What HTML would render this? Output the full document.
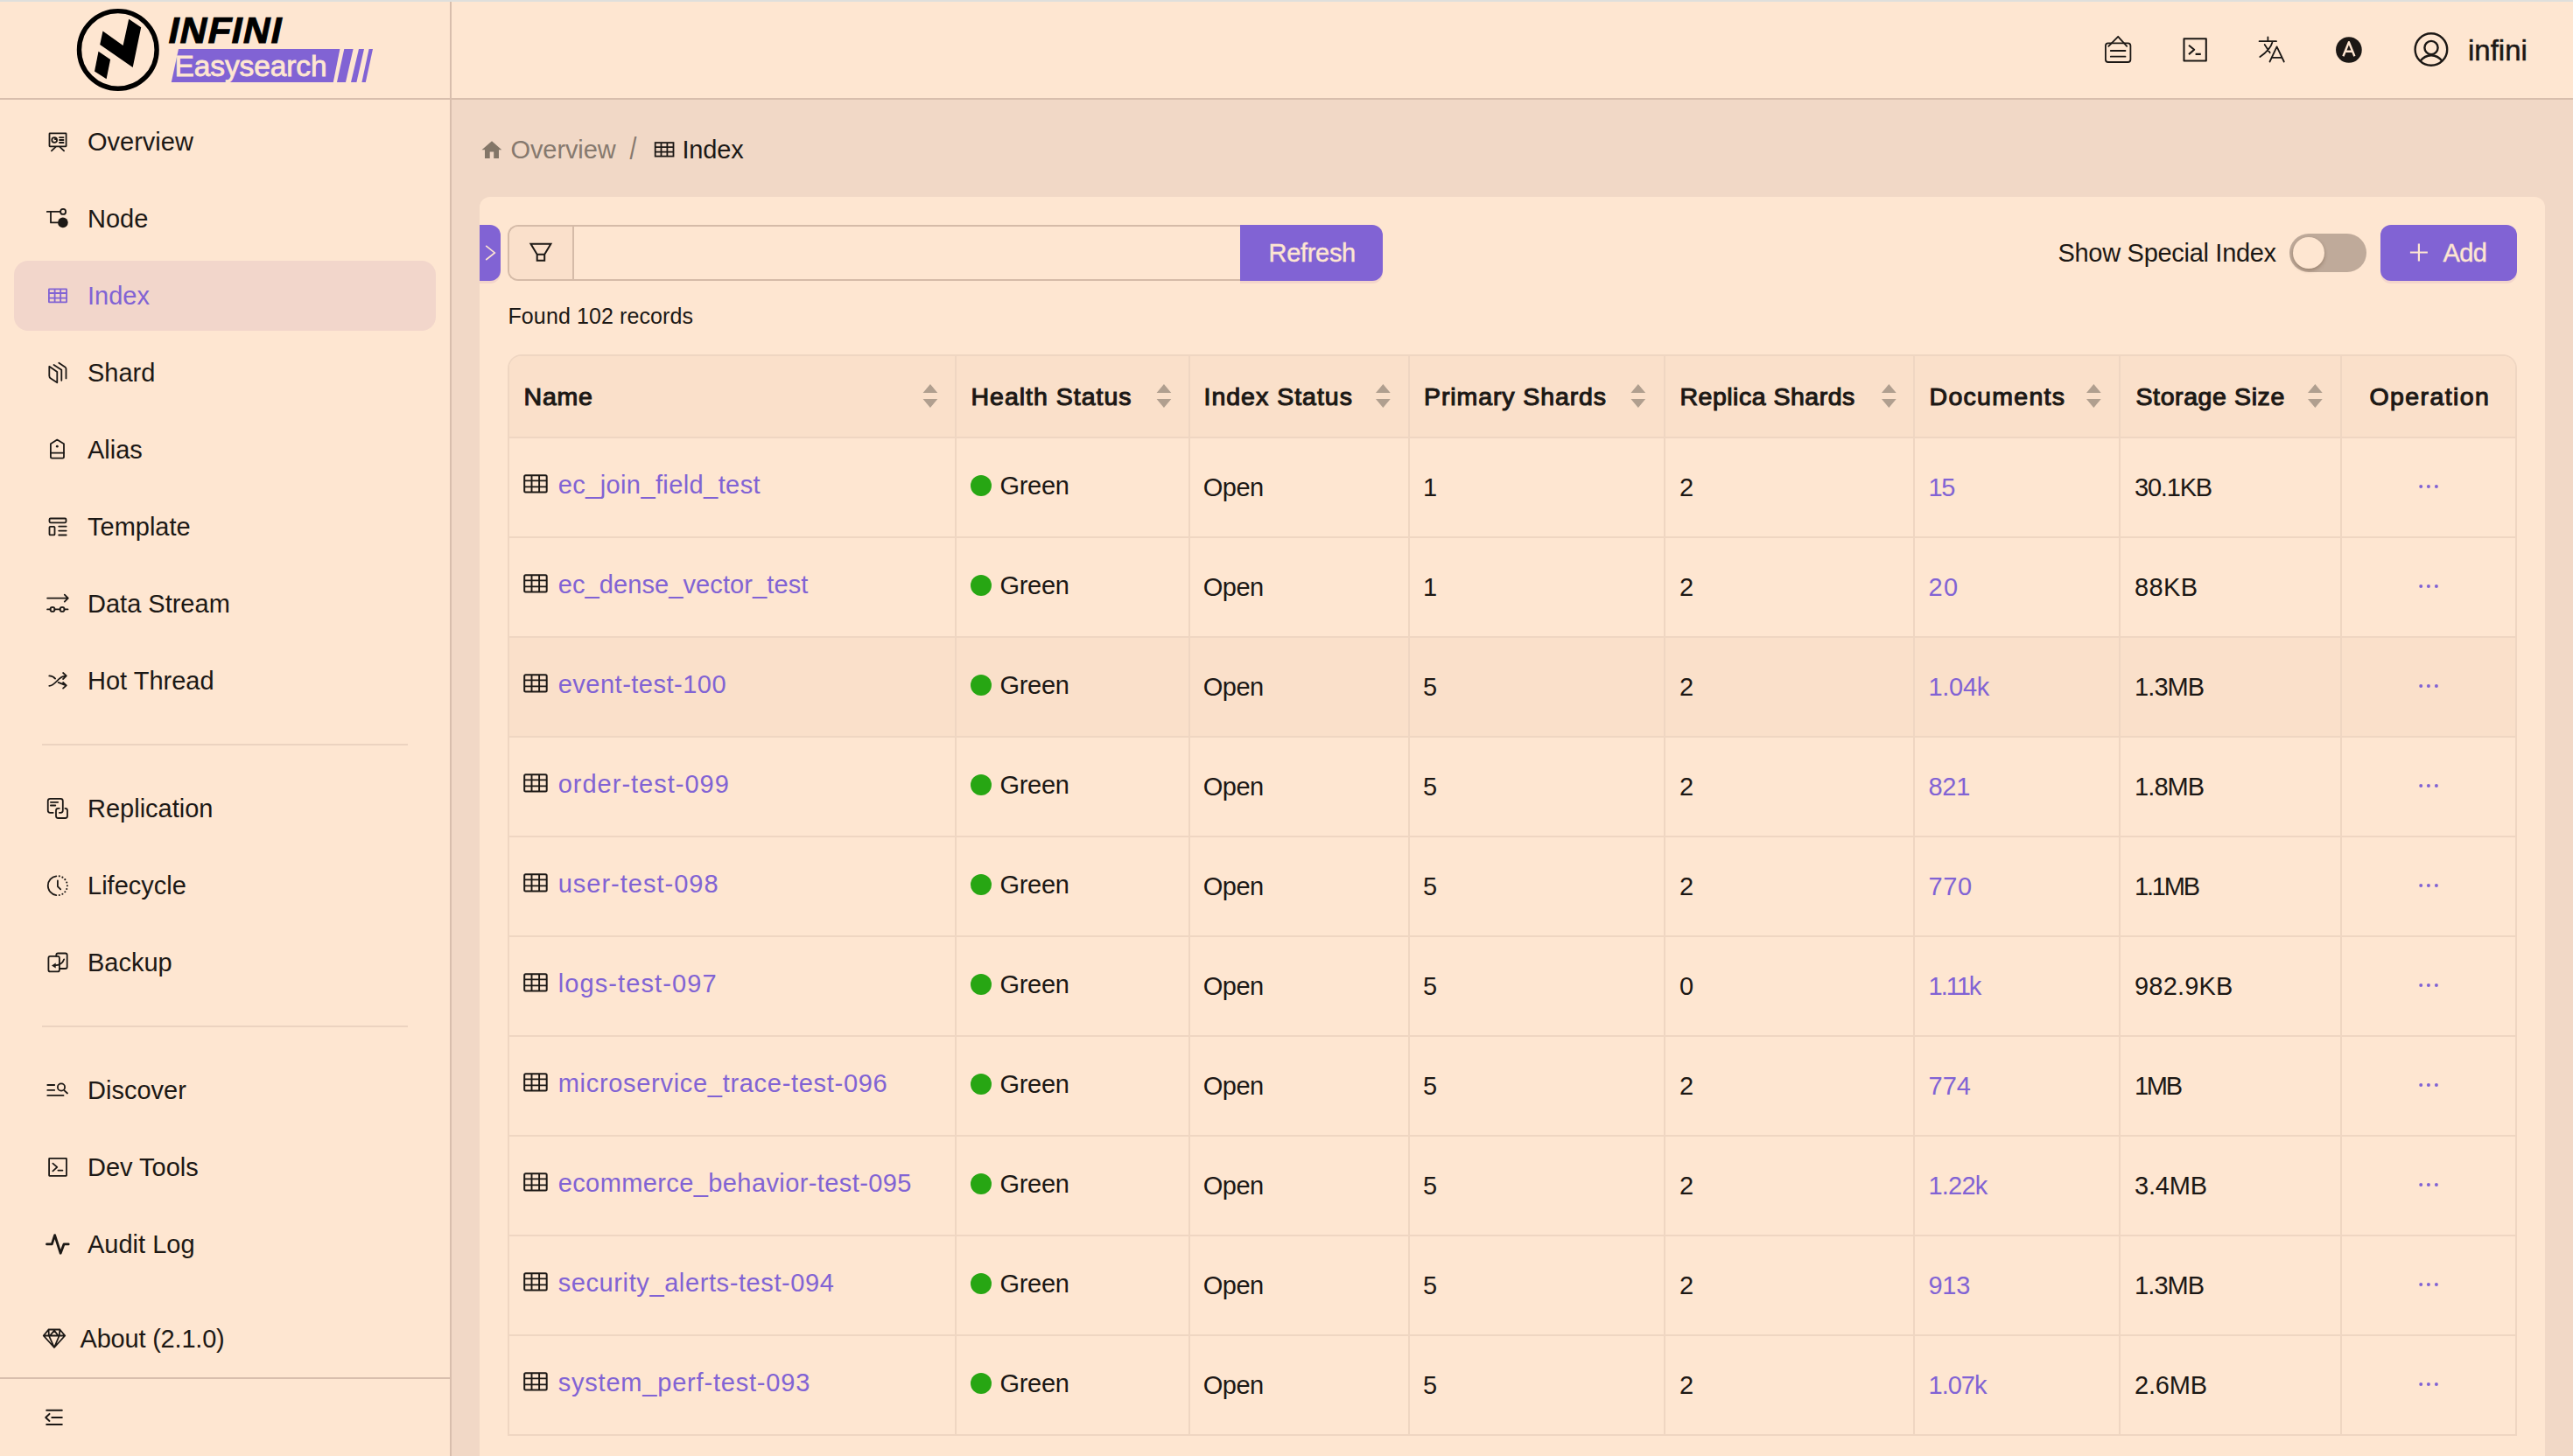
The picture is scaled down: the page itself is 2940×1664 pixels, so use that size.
<!DOCTYPE html>
<html><head><meta charset="utf-8">
<style>
*{box-sizing:border-box;margin:0;padding:0}
html,body{width:2940px;height:1664px;overflow:hidden}
body{position:relative;background:#f1d8c6;font-family:"Liberation Sans",sans-serif;color:#1c1815}
.a{position:absolute}
.t{position:absolute;white-space:nowrap}
svg{position:absolute;overflow:visible}
@media (max-width:1600px){html{zoom:0.5}}
</style></head>
<body>

<div class="a" style="left:0px;top:0px;width:2940px;height:2px;background:#dfdfdc;"></div>
<div class="a" style="left:0px;top:2px;width:2940px;height:110px;background:#fee6d1;"></div>
<div class="a" style="left:0px;top:114px;width:514px;height:1550px;background:#fee6d1;"></div>
<div class="a" style="left:0px;top:112px;width:2940px;height:2px;background:#d8bead;"></div>
<div class="a" style="left:514px;top:2px;width:2px;height:1662px;background:#d8bead;"></div>
<div class="a" style="left:16px;top:298px;width:482px;height:80px;background:#f2d6cb;border-radius:16px"></div>
<div class="t" style="left:100px;top:146.05px;font-size:29px;line-height:33px;letter-spacing:0px">Overview</div>
<div class="t" style="left:100px;top:234.05px;font-size:29px;line-height:33px;letter-spacing:0px">Node</div>
<div class="t" style="left:100px;top:322.05px;font-size:29px;line-height:33px;color:#8163d4;letter-spacing:0px">Index</div>
<div class="t" style="left:100px;top:410.05px;font-size:29px;line-height:33px;letter-spacing:0px">Shard</div>
<div class="t" style="left:100px;top:498.05px;font-size:29px;line-height:33px;letter-spacing:0px">Alias</div>
<div class="t" style="left:100px;top:586.05px;font-size:29px;line-height:33px;letter-spacing:0px">Template</div>
<div class="t" style="left:100px;top:674.05px;font-size:29px;line-height:33px;letter-spacing:0px">Data Stream</div>
<div class="t" style="left:100px;top:762.05px;font-size:29px;line-height:33px;letter-spacing:0px">Hot Thread</div>
<div class="t" style="left:100px;top:908.05px;font-size:29px;line-height:33px;letter-spacing:0px">Replication</div>
<div class="t" style="left:100px;top:996.05px;font-size:29px;line-height:33px;letter-spacing:0px">Lifecycle</div>
<div class="t" style="left:100px;top:1084.05px;font-size:29px;line-height:33px;letter-spacing:0px">Backup</div>
<div class="t" style="left:100px;top:1230.05px;font-size:29px;line-height:33px;letter-spacing:0px">Discover</div>
<div class="t" style="left:100px;top:1318.05px;font-size:29px;line-height:33px;letter-spacing:0px">Dev Tools</div>
<div class="t" style="left:100px;top:1406.05px;font-size:29px;line-height:33px;letter-spacing:0px">Audit Log</div>
<div class="t" style="left:91.5px;top:1514.05px;font-size:29px;line-height:33px;letter-spacing:-0.2px">About (2.1.0)</div>
<div class="a" style="left:48px;top:850px;width:418px;height:2px;background:#ecd3c0;"></div>
<div class="a" style="left:48px;top:1172px;width:418px;height:2px;background:#ecd3c0;"></div>
<div class="a" style="left:0px;top:1574px;width:514px;height:2px;background:#d8bead;"></div>
<div class="t" style="left:2820px;top:38.57px;font-size:33px;line-height:38px;-webkit-text-stroke:0.5px #1c1815">infini</div>
<div class="t" style="left:189.8px;top:10.95px;font-size:42px;line-height:48px;color:#000;font-weight:bold;letter-spacing:1.5px;transform:skewX(-12deg);transform-origin:0 40px;-webkit-text-stroke:0.9px #000">INFINI</div>
<div class="t" style="left:583.5px;top:155.05px;font-size:29px;line-height:33px;color:#86796e;letter-spacing:-0.1px">Overview</div>
<div class="t" style="left:719.5px;top:155.12px;font-size:28.5px;line-height:33px;color:#86796e;transform:scaleY(1.25);transform-origin:0 24px">/</div>
<div class="t" style="left:779.5px;top:155.05px;font-size:29px;line-height:33px;letter-spacing:-0.2px">Index</div>
<div class="a" style="left:548px;top:225px;width:2360px;height:1500px;background:#fee6d1;border-radius:12px"></div>
<div class="a" style="left:548px;top:257px;width:24px;height:64px;background:#8163d4;border-radius:0 12px 12px 0;box-shadow:0 3px 0 #f3d5cb"></div>
<div class="a" style="left:580px;top:257px;width:837px;height:64px;background:#fee6d1;border:2px solid #d5bba8;border-right:none;border-radius:12px 0 0 12px"></div>
<div class="a" style="left:582px;top:259px;width:72px;height:60px;background:#fae0cb;border-radius:10px 0 0 10px"></div>
<div class="a" style="left:654px;top:259px;width:2px;height:60px;background:#d5bba8;"></div>
<div class="a" style="left:1417px;top:257px;width:163px;height:64px;background:#8163d4;border-radius:0 12px 12px 0;box-shadow:0 3px 0 #f3d5cb"></div>
<div class="t" style="left:1449.5px;top:273.05px;font-size:29px;line-height:33px;color:#fee6d1;letter-spacing:-0.3px;-webkit-text-stroke:0.4px #fee6d1">Refresh</div>
<div class="t" style="left:2351.5px;top:273.05px;font-size:29px;line-height:33px;letter-spacing:-0.3px">Show Special Index</div>
<div class="a" style="left:2616px;top:267px;width:88px;height:44px;background:#bfaa9a;border-radius:22px"></div>
<div class="a" style="left:2620px;top:271px;width:36px;height:36px;background:#fee6d1;border-radius:18px;box-shadow:0 2px 4px rgba(60,30,0,.3)"></div>
<div class="a" style="left:2720px;top:257px;width:156px;height:64px;background:#8163d4;border-radius:12px;box-shadow:0 3px 0 #f3d5cb"></div>
<div class="t" style="left:2791.5px;top:273.05px;font-size:29px;line-height:33px;color:#fee6d1;letter-spacing:-0.6px;-webkit-text-stroke:0.4px #fee6d1">Add</div>
<div class="t" style="left:580.5px;top:347.34px;font-size:25px;line-height:29px;letter-spacing:0.1px">Found 102 records</div>
<div class="a" style="left:580px;top:405px;width:2296px;height:1236px;background:#fee6d1;border:2px solid #efd6c2;border-bottom:none;border-radius:16px 16px 0 0"></div>
<div class="a" style="left:582px;top:407px;width:2292px;height:92px;background:#fae0ca;border-radius:14px 14px 0 0"></div>
<div class="a" style="left:582px;top:729px;width:2292px;height:112px;background:#fae0ca;"></div>
<div class="a" style="left:1091px;top:407px;width:2px;height:1234px;background:#efd6c2;"></div>
<div class="a" style="left:1358px;top:407px;width:2px;height:1234px;background:#efd6c2;"></div>
<div class="a" style="left:1609px;top:407px;width:2px;height:1234px;background:#efd6c2;"></div>
<div class="a" style="left:1901px;top:407px;width:2px;height:1234px;background:#efd6c2;"></div>
<div class="a" style="left:2186px;top:407px;width:2px;height:1234px;background:#efd6c2;"></div>
<div class="a" style="left:2421px;top:407px;width:2px;height:1234px;background:#efd6c2;"></div>
<div class="a" style="left:2674px;top:407px;width:2px;height:1234px;background:#efd6c2;"></div>
<div class="a" style="left:580px;top:499px;width:2296px;height:2px;background:#efd6c2;"></div>
<div class="a" style="left:580px;top:613px;width:2296px;height:2px;background:#efd6c2;"></div>
<div class="a" style="left:580px;top:727px;width:2296px;height:2px;background:#efd6c2;"></div>
<div class="a" style="left:580px;top:841px;width:2296px;height:2px;background:#efd6c2;"></div>
<div class="a" style="left:580px;top:955px;width:2296px;height:2px;background:#efd6c2;"></div>
<div class="a" style="left:580px;top:1069px;width:2296px;height:2px;background:#efd6c2;"></div>
<div class="a" style="left:580px;top:1183px;width:2296px;height:2px;background:#efd6c2;"></div>
<div class="a" style="left:580px;top:1297px;width:2296px;height:2px;background:#efd6c2;"></div>
<div class="a" style="left:580px;top:1411px;width:2296px;height:2px;background:#efd6c2;"></div>
<div class="a" style="left:580px;top:1525px;width:2296px;height:2px;background:#efd6c2;"></div>
<div class="a" style="left:580px;top:1639px;width:2296px;height:2px;background:#efd6c2;"></div>
<div class="t" style="left:598.5px;top:437.22px;font-size:28.5px;line-height:33px;letter-spacing:0.8px;-webkit-text-stroke:1.1px #1c1815">Name</div>
<div class="t" style="left:1109.5px;top:437.22px;font-size:28.5px;line-height:33px;letter-spacing:1.0px;-webkit-text-stroke:1.1px #1c1815">Health Status</div>
<div class="t" style="left:1375.5px;top:437.22px;font-size:28.5px;line-height:33px;letter-spacing:1.0px;-webkit-text-stroke:1.1px #1c1815">Index Status</div>
<div class="t" style="left:1627.0px;top:437.22px;font-size:28.5px;line-height:33px;letter-spacing:0.9px;-webkit-text-stroke:1.1px #1c1815">Primary Shards</div>
<div class="t" style="left:1919.5px;top:437.22px;font-size:28.5px;line-height:33px;letter-spacing:0.5px;-webkit-text-stroke:1.1px #1c1815">Replica Shards</div>
<div class="t" style="left:2204.5px;top:437.22px;font-size:28.5px;line-height:33px;letter-spacing:1.3px;-webkit-text-stroke:1.1px #1c1815">Documents</div>
<div class="t" style="left:2440.5px;top:437.22px;font-size:28.5px;line-height:33px;letter-spacing:0.6px;-webkit-text-stroke:1.1px #1c1815">Storage Size</div>
<div class="t" style="left:2707.5px;top:437.22px;font-size:28.5px;line-height:33px;letter-spacing:1.4px;-webkit-text-stroke:1.1px #1c1815">Operation</div>
<div class="t" style="left:637.7px;top:537.65px;font-size:29px;line-height:33px;color:#8163d4;letter-spacing:0.4px">ec_join_field_test</div>
<div class="a" style="left:1109px;top:543px;width:24px;height:24px;border-radius:50%;background:#27a613"></div>
<div class="t" style="left:1142.5px;top:538.95px;font-size:29px;line-height:33px;letter-spacing:-0.3px">Green</div>
<div class="t" style="left:1374.8px;top:541.05px;font-size:29px;line-height:33px;letter-spacing:-0.5px">Open</div>
<div class="t" style="left:1626px;top:541.05px;font-size:29px;line-height:33px">1</div>
<div class="t" style="left:1919px;top:541.05px;font-size:29px;line-height:33px">2</div>
<div class="t" style="left:2203.5px;top:541.05px;font-size:29px;line-height:33px;color:#8163d4;letter-spacing:-1.5px">15</div>
<div class="t" style="left:2439px;top:541.05px;font-size:29px;line-height:33px;letter-spacing:-1.2px">30.1KB</div>
<div class="t" style="left:637.7px;top:651.65px;font-size:29px;line-height:33px;color:#8163d4;letter-spacing:0.1px">ec_dense_vector_test</div>
<div class="a" style="left:1109px;top:657px;width:24px;height:24px;border-radius:50%;background:#27a613"></div>
<div class="t" style="left:1142.5px;top:652.95px;font-size:29px;line-height:33px;letter-spacing:-0.3px">Green</div>
<div class="t" style="left:1374.8px;top:655.05px;font-size:29px;line-height:33px;letter-spacing:-0.5px">Open</div>
<div class="t" style="left:1626px;top:655.05px;font-size:29px;line-height:33px">1</div>
<div class="t" style="left:1919px;top:655.05px;font-size:29px;line-height:33px">2</div>
<div class="t" style="left:2203.5px;top:655.05px;font-size:29px;line-height:33px;color:#8163d4;letter-spacing:1.3px">20</div>
<div class="t" style="left:2439px;top:655.05px;font-size:29px;line-height:33px;letter-spacing:0.4px">88KB</div>
<div class="t" style="left:637.7px;top:765.65px;font-size:29px;line-height:33px;color:#8163d4;letter-spacing:0.5px">event-test-100</div>
<div class="a" style="left:1109px;top:771px;width:24px;height:24px;border-radius:50%;background:#27a613"></div>
<div class="t" style="left:1142.5px;top:766.95px;font-size:29px;line-height:33px;letter-spacing:-0.3px">Green</div>
<div class="t" style="left:1374.8px;top:769.05px;font-size:29px;line-height:33px;letter-spacing:-0.5px">Open</div>
<div class="t" style="left:1626px;top:769.05px;font-size:29px;line-height:33px">5</div>
<div class="t" style="left:1919px;top:769.05px;font-size:29px;line-height:33px">2</div>
<div class="t" style="left:2203.5px;top:769.05px;font-size:29px;line-height:33px;color:#8163d4;letter-spacing:-0.3px">1.04k</div>
<div class="t" style="left:2439px;top:769.05px;font-size:29px;line-height:33px;letter-spacing:-0.9px">1.3MB</div>
<div class="t" style="left:637.7px;top:879.65px;font-size:29px;line-height:33px;color:#8163d4;letter-spacing:1.0px">order-test-099</div>
<div class="a" style="left:1109px;top:885px;width:24px;height:24px;border-radius:50%;background:#27a613"></div>
<div class="t" style="left:1142.5px;top:880.95px;font-size:29px;line-height:33px;letter-spacing:-0.3px">Green</div>
<div class="t" style="left:1374.8px;top:883.05px;font-size:29px;line-height:33px;letter-spacing:-0.5px">Open</div>
<div class="t" style="left:1626px;top:883.05px;font-size:29px;line-height:33px">5</div>
<div class="t" style="left:1919px;top:883.05px;font-size:29px;line-height:33px">2</div>
<div class="t" style="left:2203.5px;top:883.05px;font-size:29px;line-height:33px;color:#8163d4;letter-spacing:-0.3px">821</div>
<div class="t" style="left:2439px;top:883.05px;font-size:29px;line-height:33px;letter-spacing:-0.9px">1.8MB</div>
<div class="t" style="left:637.7px;top:993.65px;font-size:29px;line-height:33px;color:#8163d4;letter-spacing:1.0px">user-test-098</div>
<div class="a" style="left:1109px;top:999px;width:24px;height:24px;border-radius:50%;background:#27a613"></div>
<div class="t" style="left:1142.5px;top:994.95px;font-size:29px;line-height:33px;letter-spacing:-0.3px">Green</div>
<div class="t" style="left:1374.8px;top:997.05px;font-size:29px;line-height:33px;letter-spacing:-0.5px">Open</div>
<div class="t" style="left:1626px;top:997.05px;font-size:29px;line-height:33px">5</div>
<div class="t" style="left:1919px;top:997.05px;font-size:29px;line-height:33px">2</div>
<div class="t" style="left:2203.5px;top:997.05px;font-size:29px;line-height:33px;color:#8163d4;letter-spacing:0.6px">770</div>
<div class="t" style="left:2439px;top:997.05px;font-size:29px;line-height:33px;letter-spacing:-2.2px">1.1MB</div>
<div class="t" style="left:637.7px;top:1107.65px;font-size:29px;line-height:33px;color:#8163d4;letter-spacing:1.1px">logs-test-097</div>
<div class="a" style="left:1109px;top:1113px;width:24px;height:24px;border-radius:50%;background:#27a613"></div>
<div class="t" style="left:1142.5px;top:1108.95px;font-size:29px;line-height:33px;letter-spacing:-0.3px">Green</div>
<div class="t" style="left:1374.8px;top:1111.05px;font-size:29px;line-height:33px;letter-spacing:-0.5px">Open</div>
<div class="t" style="left:1626px;top:1111.05px;font-size:29px;line-height:33px">5</div>
<div class="t" style="left:1919px;top:1111.05px;font-size:29px;line-height:33px">0</div>
<div class="t" style="left:2203.5px;top:1111.05px;font-size:29px;line-height:33px;color:#8163d4;letter-spacing:-2.0px">1.11k</div>
<div class="t" style="left:2439px;top:1111.05px;font-size:29px;line-height:33px;letter-spacing:0.2px">982.9KB</div>
<div class="t" style="left:637.7px;top:1221.65px;font-size:29px;line-height:33px;color:#8163d4;letter-spacing:0.7px">microservice_trace-test-096</div>
<div class="a" style="left:1109px;top:1227px;width:24px;height:24px;border-radius:50%;background:#27a613"></div>
<div class="t" style="left:1142.5px;top:1222.95px;font-size:29px;line-height:33px;letter-spacing:-0.3px">Green</div>
<div class="t" style="left:1374.8px;top:1225.05px;font-size:29px;line-height:33px;letter-spacing:-0.5px">Open</div>
<div class="t" style="left:1626px;top:1225.05px;font-size:29px;line-height:33px">5</div>
<div class="t" style="left:1919px;top:1225.05px;font-size:29px;line-height:33px">2</div>
<div class="t" style="left:2203.5px;top:1225.05px;font-size:29px;line-height:33px;color:#8163d4;letter-spacing:0.0px">774</div>
<div class="t" style="left:2439px;top:1225.05px;font-size:29px;line-height:33px;letter-spacing:-2.3px">1MB</div>
<div class="t" style="left:637.7px;top:1335.65px;font-size:29px;line-height:33px;color:#8163d4;letter-spacing:0.4px">ecommerce_behavior-test-095</div>
<div class="a" style="left:1109px;top:1341px;width:24px;height:24px;border-radius:50%;background:#27a613"></div>
<div class="t" style="left:1142.5px;top:1336.95px;font-size:29px;line-height:33px;letter-spacing:-0.3px">Green</div>
<div class="t" style="left:1374.8px;top:1339.05px;font-size:29px;line-height:33px;letter-spacing:-0.5px">Open</div>
<div class="t" style="left:1626px;top:1339.05px;font-size:29px;line-height:33px">5</div>
<div class="t" style="left:1919px;top:1339.05px;font-size:29px;line-height:33px">2</div>
<div class="t" style="left:2203.5px;top:1339.05px;font-size:29px;line-height:33px;color:#8163d4;letter-spacing:-0.8px">1.22k</div>
<div class="t" style="left:2439px;top:1339.05px;font-size:29px;line-height:33px;letter-spacing:-0.2px">3.4MB</div>
<div class="t" style="left:637.7px;top:1449.65px;font-size:29px;line-height:33px;color:#8163d4;letter-spacing:0.6px">security_alerts-test-094</div>
<div class="a" style="left:1109px;top:1455px;width:24px;height:24px;border-radius:50%;background:#27a613"></div>
<div class="t" style="left:1142.5px;top:1450.95px;font-size:29px;line-height:33px;letter-spacing:-0.3px">Green</div>
<div class="t" style="left:1374.8px;top:1453.05px;font-size:29px;line-height:33px;letter-spacing:-0.5px">Open</div>
<div class="t" style="left:1626px;top:1453.05px;font-size:29px;line-height:33px">5</div>
<div class="t" style="left:1919px;top:1453.05px;font-size:29px;line-height:33px">2</div>
<div class="t" style="left:2203.5px;top:1453.05px;font-size:29px;line-height:33px;color:#8163d4;letter-spacing:-0.3px">913</div>
<div class="t" style="left:2439px;top:1453.05px;font-size:29px;line-height:33px;letter-spacing:-0.9px">1.3MB</div>
<div class="t" style="left:637.7px;top:1563.65px;font-size:29px;line-height:33px;color:#8163d4;letter-spacing:0.8px">system_perf-test-093</div>
<div class="a" style="left:1109px;top:1569px;width:24px;height:24px;border-radius:50%;background:#27a613"></div>
<div class="t" style="left:1142.5px;top:1564.95px;font-size:29px;line-height:33px;letter-spacing:-0.3px">Green</div>
<div class="t" style="left:1374.8px;top:1567.05px;font-size:29px;line-height:33px;letter-spacing:-0.5px">Open</div>
<div class="t" style="left:1626px;top:1567.05px;font-size:29px;line-height:33px">5</div>
<div class="t" style="left:1919px;top:1567.05px;font-size:29px;line-height:33px">2</div>
<div class="t" style="left:2203.5px;top:1567.05px;font-size:29px;line-height:33px;color:#8163d4;letter-spacing:-1.0px">1.07k</div>
<div class="t" style="left:2439px;top:1567.05px;font-size:29px;line-height:33px;letter-spacing:-0.2px">2.6MB</div>
<svg style="left:0;top:0" width="2940" height="1664" viewBox="0 0 2940 1664"><circle cx="134.8" cy="56.9" r="44.3" fill="none" stroke="#000" stroke-width="5.4"/><polygon points="117.5,35.6 140.6,51.9 147.2,21.8 161.2,31.3 151.7,77.1 114.2,51.1" fill="#000"/><polygon points="112.5,58.7 126.1,68 121.6,90.3 108,81.6" fill="#000"/><polygon points="204,56 388.4,56 380.8,94 195.8,94" fill="#8163d4"/><polygon points="393.3,56 403.6,56 395,94 385,94" fill="#8163d4"/><polygon points="410,56 416,56 407.4,94 401,94" fill="#8163d4"/><polygon points="421.6,56 426,56 417.8,94 413.4,94" fill="#8163d4"/><g fill="none" stroke="#1c1815" stroke-width="1.8" stroke-linecap="round" stroke-linejoin="round"><rect x="56.5" y="152.4" width="19.1" height="14.9" rx="0.5"/><path d="M68 157.1H72.5M68 160H72.5M68 163H72.5M63.4 168.2L58.9 172.4M68.6 168.2L73.1 172.4"/><circle cx="62.2" cy="160" r="2.9"/></g><path d="M62.2 160V157.1A2.9 2.9 0 0 1 65.1 160Z" fill="#1c1815"/><g fill="none" stroke="#1c1815" stroke-width="1.8" stroke-linecap="round" stroke-linejoin="round"><path d="M53.8 241.9H68.4M58 241.9V254.4H66"/><circle cx="72.1" cy="241.9" r="3"/></g><circle cx="71.9" cy="254.4" r="5.8" fill="#1c1815"/><g fill="none" stroke="#8163d4" stroke-width="1.8"><rect x="55.9" y="330.4" width="20.2" height="15" rx="0.5"/><path d="M62.6 330.4V345.4M69.2 330.4V345.4M55.9 335H76.1M55.9 340.6H76.1"/></g><g fill="none" stroke="#1c1815" stroke-width="1.8" stroke-linecap="round" stroke-linejoin="round"><path d="M56.3 418.8L65.3 424.9V437.3L58 432.6Q56.3 431.5 56.3 429.5Z"/><path d="M61.5 417L70.3 422.7V434.8"/><path d="M67.3 414.8L74.3 419.4Q75.5 420.3 75.5 421.5V432.4"/></g><g fill="none" stroke="#1c1815" stroke-width="1.8" stroke-linecap="round" stroke-linejoin="round"><path d="M65.3 502.6L73 507.2V522Q73 523.6 71.4 523.6H59.5Q57.9 523.6 57.9 522V507.2Z"/><path d="M57.9 517.6H73"/></g><circle cx="65.3" cy="510.2" r="1.4" fill="#1c1815"/><g fill="none" stroke="#1c1815" stroke-width="1.8" stroke-linecap="round" stroke-linejoin="round"><rect x="56.5" y="592.5" width="19" height="4.8" rx="1.2"/><rect x="56.5" y="601.8" width="6" height="9.6" rx="1"/><path d="M67.2 601.6H75.7M67.2 606.6H75.7M67.2 611.5H75.7"/></g><g fill="none" stroke="#1c1815" stroke-width="1.8" stroke-linecap="round" stroke-linejoin="round"><path d="M54.1 683.6H77.5M73.8 679.6L77.8 683.6L73.8 687.6M54.1 696.4H57.5M62.5 696.4H68.6M73.6 696.4H77.5"/><circle cx="60" cy="696.4" r="2.5"/><circle cx="71.1" cy="696.4" r="2.5"/></g><g fill="none" stroke="#1c1815" stroke-width="1.8" stroke-linecap="round" stroke-linejoin="round"><path d="M56.3 772.4C59.5 772.4 61.7 773.8 63.1 775.6M56.3 783.8C64 783.8 66 772.3 75.5 772.3M72.1 769L75.8 772.3L72.1 776M66.6 779.9L75.5 783.3M72.1 780L75.8 783.3L72.1 786.6"/></g><g fill="none" stroke="#1c1815" stroke-width="1.8" stroke-linecap="round" stroke-linejoin="round"><path d="M60.7 928.8H57.3Q54.75 928.8 54.75 926.3V915.3Q54.75 912.8 57.3 912.8H69.3Q71.8 912.8 71.8 915.3V926.3Q71.8 928.8 69.3 928.8H67.9"/><path d="M57.9 916.8H66.2M57.9 920.5H63.3"/><path d="M67.8 923.8H66.5Q64 923.8 64 926.3V932.5Q64 935 66.5 935H74.5Q77 935 77 932.5V926.3Q77 923.8 74.5 923.8H74.4"/></g><g fill="none" stroke="#1c1815" stroke-width="1.8" stroke-linecap="round" stroke-linejoin="round"><path d="M64.3 1001.3A11 11 0 0 0 64.3 1023.1"/><path d="M65.9 1006.5V1013.1L69.2 1016.4"/></g><circle cx="67.81" cy="1001.37" r="1.05" fill="#1c1815"/><circle cx="71.40" cy="1002.67" r="1.05" fill="#1c1815"/><circle cx="74.33" cy="1005.13" r="1.05" fill="#1c1815"/><circle cx="76.24" cy="1008.44" r="1.05" fill="#1c1815"/><circle cx="76.90" cy="1012.20" r="1.05" fill="#1c1815"/><circle cx="76.24" cy="1015.96" r="1.05" fill="#1c1815"/><circle cx="74.33" cy="1019.27" r="1.05" fill="#1c1815"/><circle cx="71.40" cy="1021.73" r="1.05" fill="#1c1815"/><circle cx="67.81" cy="1023.03" r="1.05" fill="#1c1815"/><g fill="none" stroke="#1c1815" stroke-width="1.8" stroke-linecap="round" stroke-linejoin="round"><rect x="55.4" y="1092.9" width="12.5" height="17.5" rx="2"/><path d="M64.3 1092.9V1091.6Q64.3 1089.5 66.3 1089.5H74.6Q76.7 1089.5 76.7 1091.6V1105Q76.7 1107 74.6 1107H67.9"/><path d="M73.2 1096.3Q71 1103.2 62 1103.4"/></g><path d="M59 1103.4L63.7 1100.4L63.7 1106.4Z" fill="#1c1815"/><g fill="none" stroke="#1c1815" stroke-width="1.8" stroke-linecap="round" stroke-linejoin="round"><path d="M54.3 1240H62.2M54.3 1245.9H62.2M54.3 1251.9H72.5M73.6 1246.3L77 1249.5"/><circle cx="70" cy="1242.5" r="4.1"/></g><g fill="none" stroke="#1c1815" stroke-width="1.8" stroke-linecap="round" stroke-linejoin="round"><rect x="56.1" y="1323.9" width="19.9" height="19.9" rx="0.5"/><path d="M60.4 1329.6L65.3 1333.9L60.4 1338.3M66.4 1337.6H71.4"/></g><path d="M53.5 1421.9H59.3L62.6 1411.6L69.2 1432.2L73 1421.9H78.2" fill="none" stroke="#1c1815" stroke-width="2.8" stroke-linecap="round" stroke-linejoin="round"/><g fill="none" stroke="#1c1815" stroke-width="1.8" stroke-linecap="round" stroke-linejoin="round"><path d="M55.5 1519.5H68.4L74.2 1526.5L62 1540L49.75 1526.5Z M49.75 1526.5H74.2 M55.5 1519.5L55.9 1526.5L62 1540L67.7 1526.5L68.4 1519.5 M57 1526.5L62 1520.6L66.6 1526.5"/></g><g fill="none" stroke="#1c1815" stroke-width="2" stroke-linecap="round" stroke-linejoin="round"><path d="M53.2 1611.8H70.8M59.3 1619.9H70.8M53.2 1628H70.8M56.5 1615.9L52.2 1619.9L56.5 1623.9"/></g><g fill="none" stroke="#1c1815" stroke-width="1.8" stroke-linecap="round" stroke-linejoin="round"><rect x="2405.9" y="49.3" width="28.5" height="21.7" rx="3"/><path d="M2409.3 52.8L2420.2 41.8L2430.2 52.8M2411.8 58H2428.5M2411.8 64.7H2428.5"/></g><g fill="none" stroke="#1c1815" stroke-width="2.06" stroke-linejoin="round"><rect x="2495.5" y="44.2" width="25.3" height="25.3"/><path d="M2501 51.8L2507.2 56.8L2501 62.1M2508.6 61.9H2514.8"/></g><g fill="none" stroke="#1c1815" stroke-width="1.8" stroke-linecap="round" stroke-linejoin="round"><path d="M2581.6 47.2H2601M2591.4 42.5V47.2M2596.4 48.5Q2594 57 2582.3 65M2587.7 51L2593.7 60.2M2593.5 70.5L2601.6 53.4L2609.8 70.5M2596.2 65.9H2607"/></g><circle cx="2683.9" cy="57" r="14.85" fill="#1c1815"/><path d="M2677.4 64.2L2683.9 48.2L2690.4 64.2M2679.7 58.8H2688.1" fill="none" stroke="#fee6d1" stroke-width="2.4" stroke-linejoin="round"/><g fill="none" stroke="#1c1815" stroke-width="2.4"><circle cx="2777.9" cy="56.5" r="18.3"/><circle cx="2778" cy="54.5" r="7.6"/><path d="M2765 70.2Q2770.5 63.2 2778 63.2Q2785.5 63.2 2791 70.2"/></g><path d="M562 161.2L573.3 171.2H570V181H564.2V173.4H559.7V181H554V171.2H550.5Z" fill="#837668"/><g fill="none" stroke="#1c1815" stroke-width="1.8"><rect x="748.7" y="163.1" width="20.8" height="15.5"/><path d="M755.5 163.1V178.6M762.4 163.1V178.6M748.7 168.1H769.5M748.7 173.6H769.5"/></g><path d="M555.2 280.8L565.3 289L555.2 297" fill="none" stroke="#fee6d1" stroke-width="1.6"/><path d="M606.5 278.8H629.4L622.2 290.7V297.8H613.7V290.7Z M613.7 290.7H622.2" fill="none" stroke="#1c1815" stroke-width="2"/><path d="M2763.9 278.5V298.5M2753.9 288.5H2773.9" stroke="#fee6d1" stroke-width="2.2"/><path d="M1062.9499999999998 439 L1071.3 448.9 L1054.6 448.9 Z M1054.6 456.1 L1071.3 456.1 L1062.9499999999998 465.9 Z" fill="#b09f8f"/><path d="M1329.9499999999998 439 L1338.3 448.9 L1321.6 448.9 Z M1321.6 456.1 L1338.3 456.1 L1329.9499999999998 465.9 Z" fill="#b09f8f"/><path d="M1580.35 439 L1588.7 448.9 L1572 448.9 Z M1572 456.1 L1588.7 456.1 L1580.35 465.9 Z" fill="#b09f8f"/><path d="M1871.85 439 L1880.2 448.9 L1863.5 448.9 Z M1863.5 456.1 L1880.2 456.1 L1871.85 465.9 Z" fill="#b09f8f"/><path d="M2158.35 439 L2166.7 448.9 L2150 448.9 Z M2150 456.1 L2166.7 456.1 L2158.35 465.9 Z" fill="#b09f8f"/><path d="M2392.35 439 L2400.7 448.9 L2384 448.9 Z M2384 456.1 L2400.7 456.1 L2392.35 465.9 Z" fill="#b09f8f"/><path d="M2645.35 439 L2653.7 448.9 L2637 448.9 Z M2637 456.1 L2653.7 456.1 L2645.35 465.9 Z" fill="#b09f8f"/><g transform="translate(0,0)"><rect x="599.2" y="543.2" width="25.5" height="19.3" rx="1.5" fill="none" stroke="#1c1815" stroke-width="2"/><path d="M607.5 543.2V562.5M616.1 543.2V562.5M599.2 549.4H624.7M599.2 556.4H624.7" stroke="#1c1815" stroke-width="1.9"/></g><g fill="#8163d4"><circle cx="2766.2" cy="555.9" r="2"/><circle cx="2774.9" cy="555.9" r="2"/><circle cx="2783.9" cy="555.9" r="2"/></g><g transform="translate(0,114)"><rect x="599.2" y="543.2" width="25.5" height="19.3" rx="1.5" fill="none" stroke="#1c1815" stroke-width="2"/><path d="M607.5 543.2V562.5M616.1 543.2V562.5M599.2 549.4H624.7M599.2 556.4H624.7" stroke="#1c1815" stroke-width="1.9"/></g><g fill="#8163d4"><circle cx="2766.2" cy="669.9" r="2"/><circle cx="2774.9" cy="669.9" r="2"/><circle cx="2783.9" cy="669.9" r="2"/></g><g transform="translate(0,228)"><rect x="599.2" y="543.2" width="25.5" height="19.3" rx="1.5" fill="none" stroke="#1c1815" stroke-width="2"/><path d="M607.5 543.2V562.5M616.1 543.2V562.5M599.2 549.4H624.7M599.2 556.4H624.7" stroke="#1c1815" stroke-width="1.9"/></g><g fill="#8163d4"><circle cx="2766.2" cy="783.9" r="2"/><circle cx="2774.9" cy="783.9" r="2"/><circle cx="2783.9" cy="783.9" r="2"/></g><g transform="translate(0,342)"><rect x="599.2" y="543.2" width="25.5" height="19.3" rx="1.5" fill="none" stroke="#1c1815" stroke-width="2"/><path d="M607.5 543.2V562.5M616.1 543.2V562.5M599.2 549.4H624.7M599.2 556.4H624.7" stroke="#1c1815" stroke-width="1.9"/></g><g fill="#8163d4"><circle cx="2766.2" cy="897.9" r="2"/><circle cx="2774.9" cy="897.9" r="2"/><circle cx="2783.9" cy="897.9" r="2"/></g><g transform="translate(0,456)"><rect x="599.2" y="543.2" width="25.5" height="19.3" rx="1.5" fill="none" stroke="#1c1815" stroke-width="2"/><path d="M607.5 543.2V562.5M616.1 543.2V562.5M599.2 549.4H624.7M599.2 556.4H624.7" stroke="#1c1815" stroke-width="1.9"/></g><g fill="#8163d4"><circle cx="2766.2" cy="1011.9" r="2"/><circle cx="2774.9" cy="1011.9" r="2"/><circle cx="2783.9" cy="1011.9" r="2"/></g><g transform="translate(0,570)"><rect x="599.2" y="543.2" width="25.5" height="19.3" rx="1.5" fill="none" stroke="#1c1815" stroke-width="2"/><path d="M607.5 543.2V562.5M616.1 543.2V562.5M599.2 549.4H624.7M599.2 556.4H624.7" stroke="#1c1815" stroke-width="1.9"/></g><g fill="#8163d4"><circle cx="2766.2" cy="1125.9" r="2"/><circle cx="2774.9" cy="1125.9" r="2"/><circle cx="2783.9" cy="1125.9" r="2"/></g><g transform="translate(0,684)"><rect x="599.2" y="543.2" width="25.5" height="19.3" rx="1.5" fill="none" stroke="#1c1815" stroke-width="2"/><path d="M607.5 543.2V562.5M616.1 543.2V562.5M599.2 549.4H624.7M599.2 556.4H624.7" stroke="#1c1815" stroke-width="1.9"/></g><g fill="#8163d4"><circle cx="2766.2" cy="1239.9" r="2"/><circle cx="2774.9" cy="1239.9" r="2"/><circle cx="2783.9" cy="1239.9" r="2"/></g><g transform="translate(0,798)"><rect x="599.2" y="543.2" width="25.5" height="19.3" rx="1.5" fill="none" stroke="#1c1815" stroke-width="2"/><path d="M607.5 543.2V562.5M616.1 543.2V562.5M599.2 549.4H624.7M599.2 556.4H624.7" stroke="#1c1815" stroke-width="1.9"/></g><g fill="#8163d4"><circle cx="2766.2" cy="1353.9" r="2"/><circle cx="2774.9" cy="1353.9" r="2"/><circle cx="2783.9" cy="1353.9" r="2"/></g><g transform="translate(0,912)"><rect x="599.2" y="543.2" width="25.5" height="19.3" rx="1.5" fill="none" stroke="#1c1815" stroke-width="2"/><path d="M607.5 543.2V562.5M616.1 543.2V562.5M599.2 549.4H624.7M599.2 556.4H624.7" stroke="#1c1815" stroke-width="1.9"/></g><g fill="#8163d4"><circle cx="2766.2" cy="1467.9" r="2"/><circle cx="2774.9" cy="1467.9" r="2"/><circle cx="2783.9" cy="1467.9" r="2"/></g><g transform="translate(0,1026)"><rect x="599.2" y="543.2" width="25.5" height="19.3" rx="1.5" fill="none" stroke="#1c1815" stroke-width="2"/><path d="M607.5 543.2V562.5M616.1 543.2V562.5M599.2 549.4H624.7M599.2 556.4H624.7" stroke="#1c1815" stroke-width="1.9"/></g><g fill="#8163d4"><circle cx="2766.2" cy="1581.9" r="2"/><circle cx="2774.9" cy="1581.9" r="2"/><circle cx="2783.9" cy="1581.9" r="2"/></g></svg>
<div class="t" style="left:199.5px;top:56.49px;font-size:33.5px;line-height:39px;color:#fee6d1;letter-spacing:-0.1px;-webkit-text-stroke:0.8px #fee6d1">Easysearch</div>
</body></html>
